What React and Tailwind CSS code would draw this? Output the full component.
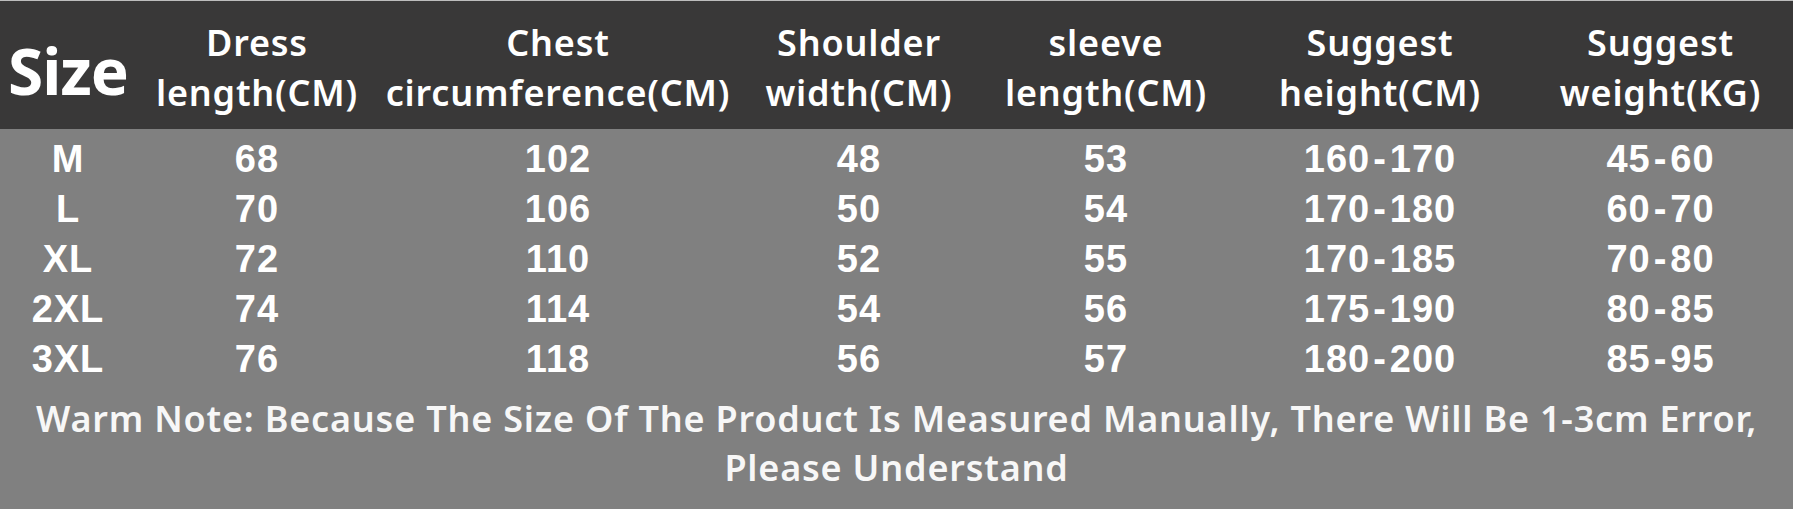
import React from 'react';

const cols = ['w-[136px]', 'w-[242px]', 'w-[360px]', 'w-[242px]', 'w-[252px]', 'w-[296px]', 'w-[265px]'];

const headers = [
  ['Dress', 'length(CM)'],
  ['Chest', 'circumference(CM)'],
  ['Shoulder', 'width(CM)'],
  ['sleeve', 'length(CM)'],
  ['Suggest', 'height(CM)'],
  ['Suggest', 'weight(KG)'],
];

const rows = [
  ['M', '68', '102', '48', '53', '160-170', '45-60'],
  ['L', '70', '106', '50', '54', '170-180', '60-70'],
  ['XL', '72', '110', '52', '55', '170-185', '70-80'],
  ['2XL', '74', '114', '54', '56', '175-190', '80-85'],
  ['3XL', '76', '118', '56', '57', '180-200', '85-95'],
];

// ranges have a little air round the hyphen
function Cell({ value }) {
  if (!value.includes('-')) return value;
  const [a, b] = value.split('-');
  return (
    <>
      {a}
      <span className="mx-[3px]">-</span>
      {b}
    </>
  );
}

export default function App() {
  return (
    <div className="w-[1793px] h-[509px] bg-[#808080] text-white overflow-hidden flex flex-col">
      {/* header band */}
      <div className="h-[129px] bg-[#393838] border-t border-[#bdbdbd] flex font-['Noto_Sans',sans-serif]">
        <div className={`${cols[0]} flex items-center justify-center pt-[12px] text-[64px] font-bold leading-none tracking-[-1px]`}>
          Size
        </div>
        {headers.map((h, i) => (
          <div
            key={i}
            className={`${cols[i + 1]} pt-[17px] text-center text-[36px] font-semibold leading-[50px] tracking-[0.8px] whitespace-nowrap`}
          >
            <div>{h[0]}</div>
            <div>{h[1]}</div>
          </div>
        ))}
      </div>

      {/* data rows */}
      <div className="pt-[5px] font-['Liberation_Sans',Arial,sans-serif] font-bold text-[38px] leading-[50px] tracking-[1px]">
        {rows.map((r, ri) => (
          <div key={ri} className="flex">
            {r.map((v, ci) => (
              <div key={ci} className={`${cols[ci]} text-center`}>
                <Cell value={v} />
              </div>
            ))}
          </div>
        ))}
      </div>

      {/* note */}
      <div className="pt-[10px] text-center font-['Noto_Sans',sans-serif] font-semibold text-[36px] leading-[49px] tracking-[0.8px] text-[#f7f7f7]">
        <div className="whitespace-nowrap">
          Warm Note: Because The Size Of The Product Is Measured Manually, There Will Be 1-3cm Error,
        </div>
        <div>Please Understand</div>
      </div>
    </div>
  );
}
